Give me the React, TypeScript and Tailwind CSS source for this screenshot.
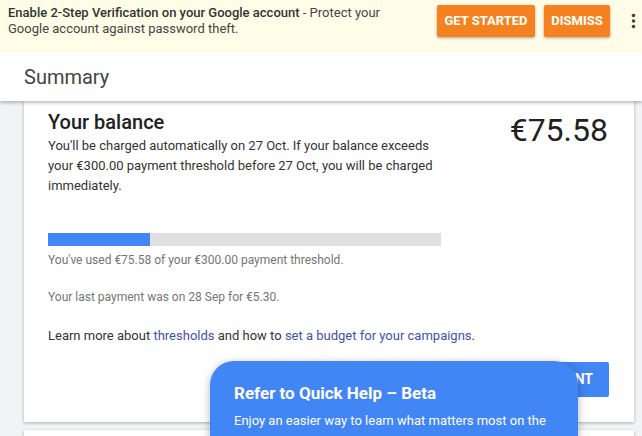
export default function App() {
  return (
    <div className="relative h-[436px] w-full overflow-hidden bg-[#f1f3f4] font-['Roboto',sans-serif]">
      <div className="flex h-[52px] items-start bg-[#fffde7]">
        <p className="w-[400px] pl-2 pt-[5px] text-[13px] leading-[16px] text-[#444]">
          <span className="font-medium text-[#333]">Enable 2-Step Verification on your Google account</span> - Protect your
          Google account against password theft.
        </p>
        <div className="ml-[37px] mt-[5px] flex gap-[9px]">
          <button className="h-[32px] w-[98px] rounded-[2px] bg-[#f5821f] text-[13px] font-bold text-white shadow-[0_1px_3px_rgba(0,0,0,0.35)]">
            GET STARTED
          </button>
          <button className="h-[32px] w-[66px] rounded-[2px] bg-[#f5821f] text-[13px] font-bold text-white shadow-[0_1px_3px_rgba(0,0,0,0.35)]">
            DISMISS
          </button>
        </div>
        <svg className="ml-[21px] mt-[13px]" width="5" height="16" viewBox="0 0 5 16" aria-hidden="true">
          <circle cx="2.5" cy="2.5" r="1.8" fill="#444" />
          <circle cx="2.5" cy="8" r="1.8" fill="#444" />
          <circle cx="2.5" cy="13.5" r="1.8" fill="#444" />
        </svg>
      </div>

      <div className="relative z-10 flex h-[49px] items-center bg-white pl-6 shadow-[0_2px_3px_rgba(0,0,0,0.25)]">
        <h1 className="text-[20px] text-[#444]">Summary</h1>
      </div>

      <section className="ml-6 mr-2 bg-white px-6 pb-[25px] pt-[9px] shadow-[0_1px_3px_rgba(0,0,0,0.3)]">
        <div className="flex items-start justify-between">
          <div className="w-[395px]">
            <h2 className="text-[20px] font-medium leading-[24px] text-[#212121]">Your balance</h2>
            <p className="mt-[2px] text-[13px] leading-[20px] text-[#333]">
              You'll be charged automatically on 27 Oct. If your balance exceeds your €300.00 payment threshold before
              27 Oct, you will be charged immediately.
            </p>
          </div>
          <p className="mr-[2px] mt-[1px] text-[32px] leading-[38px] text-[#212121]">€75.58</p>
        </div>

        <div className="mt-[37px] h-[13px] w-[393px] bg-[#e0e0e0]">
          <div className="h-full w-[102px] bg-[#4285f4]" />
        </div>
        <p className="mt-[6px] text-[12px] leading-[16px] text-[#757575]">
          You've used €75.58 of your €300.00 payment threshold.
        </p>
        <p className="mt-[21px] text-[12px] leading-[16px] text-[#757575]">
          Your last payment was on 28 Sep for €5.30.
        </p>
        <p className="mt-[21px] text-[13px] leading-[20px] text-[#333]">
          Learn more about <span className="text-[#3f51b5]">thresholds</span> and how to{" "}
          <span className="text-[#3f51b5]">set a budget for your campaigns</span>.
        </p>
        <div className="mt-[16px] flex justify-end">
          <button className="mr-[1px] h-[35px] rounded-[2px] bg-[#4285f4] px-4 text-[14px] font-bold text-white">
            MAKE A PAYMENT
          </button>
        </div>
      </section>

      <div className="ml-6 mr-2 mt-[8px] h-[40px] bg-white shadow-[0_1px_3px_rgba(0,0,0,0.3)]" />

      <div className="absolute left-[210px] top-[361px] z-20 h-[120px] w-[368px] rounded-t-[24px] bg-[#4285f4] pl-6 pr-4 pt-[21px] text-white shadow-[0_2px_8px_rgba(0,0,0,0.3)]">
        <h3 className="text-[17px] font-bold leading-[22px]">Refer to Quick Help – Beta</h3>
        <p className="mt-[7px] text-[13px] leading-[20px]">
          Enjoy an easier way to learn what matters most on the pages you visit.
        </p>
      </div>
    </div>
  );
}
